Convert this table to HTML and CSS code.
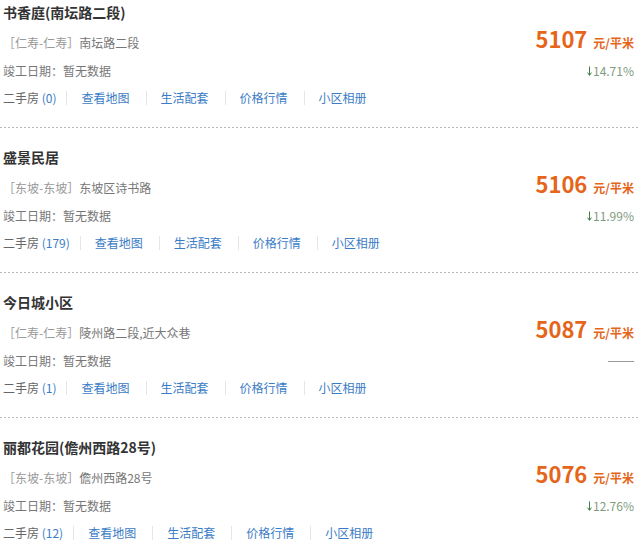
FILE: index.html
```html
<!DOCTYPE html>
<html lang="zh-CN">
<head>
<meta charset="utf-8">
<title>小区列表</title>
<link rel="stylesheet" href="styles.css">
</head>
<body>
<ul class="list">
  <li class="item">
    <div class="title">书香庭(南坛路二段)</div>
    <div class="row row-loc">
      <span class="loc"><span class="area">［仁寿-仁寿］</span>南坛路二段</span>
      <span class="price"><b class="num">5107</b><span class="unit">元/平米</span></span>
    </div>
    <div class="row row-date">
      <span class="date">竣工日期：暂无数据</span>
      <span class="trend"><svg class="arrow" width="5" height="10" viewBox="0 0 5 10"><path d="M2.5 0.5V9M0.6 6.6L2.5 9.4L4.4 6.6" fill="none" stroke="currentColor" stroke-width="1"/></svg>14.71%</span>
    </div>
    <div class="links">
      <span class="sale">二手房 <a href="#">(0)</a></span>
      <a class="link" href="#">查看地图</a>
      <a class="link" href="#">生活配套</a>
      <a class="link" href="#">价格行情</a>
      <a class="link" href="#">小区相册</a>
    </div>
  </li>
  <li class="item">
    <div class="title">盛景民居</div>
    <div class="row row-loc">
      <span class="loc"><span class="area">［东坡-东坡］</span>东坡区诗书路</span>
      <span class="price"><b class="num">5106</b><span class="unit">元/平米</span></span>
    </div>
    <div class="row row-date">
      <span class="date">竣工日期：暂无数据</span>
      <span class="trend"><svg class="arrow" width="5" height="10" viewBox="0 0 5 10"><path d="M2.5 0.5V9M0.6 6.6L2.5 9.4L4.4 6.6" fill="none" stroke="currentColor" stroke-width="1"/></svg>11.99%</span>
    </div>
    <div class="links">
      <span class="sale">二手房 <a href="#">(179)</a></span>
      <a class="link" href="#">查看地图</a>
      <a class="link" href="#">生活配套</a>
      <a class="link" href="#">价格行情</a>
      <a class="link" href="#">小区相册</a>
    </div>
  </li>
  <li class="item">
    <div class="title">今日城小区</div>
    <div class="row row-loc">
      <span class="loc"><span class="area">［仁寿-仁寿］</span>陵州路二段,近大众巷</span>
      <span class="price"><b class="num">5087</b><span class="unit">元/平米</span></span>
    </div>
    <div class="row row-date">
      <span class="date">竣工日期：暂无数据</span>
      <span class="none"></span>
    </div>
    <div class="links">
      <span class="sale">二手房 <a href="#">(1)</a></span>
      <a class="link" href="#">查看地图</a>
      <a class="link" href="#">生活配套</a>
      <a class="link" href="#">价格行情</a>
      <a class="link" href="#">小区相册</a>
    </div>
  </li>
  <li class="item">
    <div class="title">丽都花园(儋州西路28号)</div>
    <div class="row row-loc">
      <span class="loc"><span class="area">［东坡-东坡］</span>儋州西路28号</span>
      <span class="price"><b class="num">5076</b><span class="unit">元/平米</span></span>
    </div>
    <div class="row row-date">
      <span class="date">竣工日期：暂无数据</span>
      <span class="trend"><svg class="arrow" width="5" height="10" viewBox="0 0 5 10"><path d="M2.5 0.5V9M0.6 6.6L2.5 9.4L4.4 6.6" fill="none" stroke="currentColor" stroke-width="1"/></svg>12.76%</span>
    </div>
    <div class="links">
      <span class="sale">二手房 <a href="#">(12)</a></span>
      <a class="link" href="#">查看地图</a>
      <a class="link" href="#">生活配套</a>
      <a class="link" href="#">价格行情</a>
      <a class="link" href="#">小区相册</a>
    </div>
  </li>
</ul>
</body>
</html>
```

FILE: styles.css
```css
html, body {
  margin: 0;
  padding: 0;
  background: #fff;
}
body {
  font-family: "Noto Sans CJK SC", "Noto Sans", sans-serif;
  font-size: 12px;
  color: #777;
}
.list {
  list-style: none;
  margin: 0;
  padding: 0;
}
.item {
  padding: 0 6px 18px 3px;
  background: repeating-linear-gradient(to right, #b8b8b8 0 2px, transparent 2px 4px) left bottom / 100% 1px no-repeat;
}
.item + .item {
  margin-top: 17px;
}
.title {
  font-size: 14px;
  font-weight: bold;
  color: #333;
  line-height: 24px;
}
.row {
  display: flex;
  justify-content: space-between;
  line-height: 24px;
}
.row-loc {
  align-items: baseline;
  margin-top: 2px;
}
.row-date {
  margin-top: 4px;
  align-items: center;
}
.area {
  color: #999;
}
.loc {
  color: #777;
}
.date {
  color: #777;
}
.price {
  color: #e5651a;
  white-space: nowrap;
}
.num {
  font-size: 22px;
  font-weight: bold;
  line-height: 24px;
}
.unit {
  font-size: 12px;
  font-weight: bold;
  margin-left: 6px;
}
.trend {
  display: flex;
  align-items: center;
  color: #7f9c80;
}
.arrow {
  color: #3f7f44;
  margin-right: 1px;
}
.none {
  width: 26px;
  height: 1px;
  background: #999;
}
.links {
  display: flex;
  align-items: center;
  margin-top: 3px;
  line-height: 24px;
}
.links a {
  color: #3b7cc6;
  text-decoration: none;
}
.sale {
  color: #666;
  padding-right: 10px;
}
.link {
  line-height: 14px;
  padding: 0 16px 0 14px;
  border-left: 1px solid #e6e6e6;
}
```
